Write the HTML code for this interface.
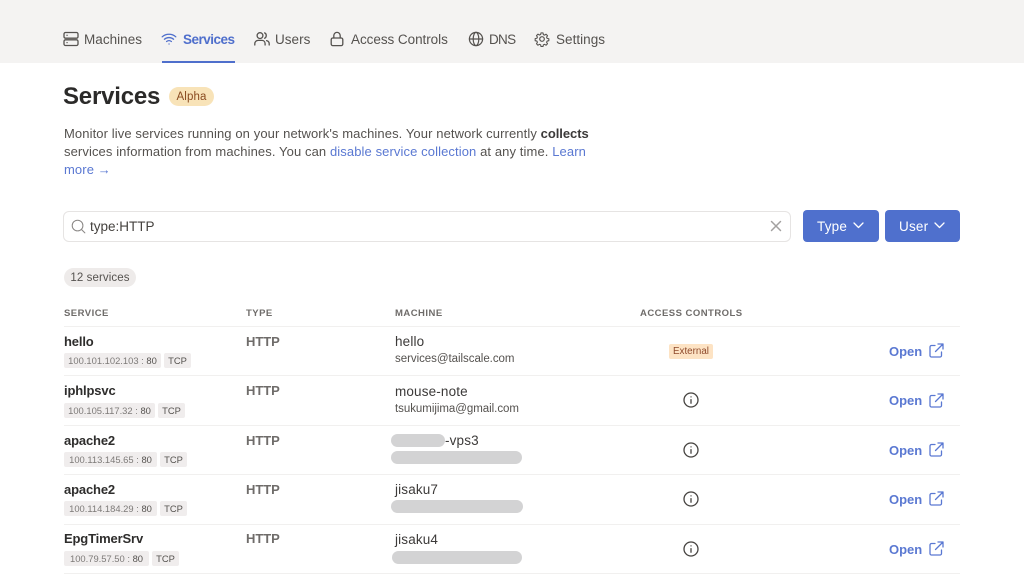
<!DOCTYPE html>
<html><head><meta charset="utf-8">
<style>
html,body{margin:0;padding:0;background:#fff}
#p{position:relative;width:1024px;height:581px;overflow:hidden;background:#fff;font-family:"Liberation Sans",sans-serif;color:#3c3a39}
.t{position:absolute;white-space:nowrap;line-height:18px}
.b{position:absolute}
svg{position:absolute;fill:none;stroke-linecap:round;stroke-linejoin:round}
.nav{font-size:13.5px;color:#55524f;top:31px;letter-spacing:.03px}
.hd{font-size:9.5px;font-weight:bold;color:#6f6c6a;letter-spacing:.47px;top:305px}
.nm{font-size:13px;font-weight:bold;color:#2e2d2c;letter-spacing:-.15px;left:64px}
.ty{font-size:13px;font-weight:bold;color:#6f6c6a;left:246px;letter-spacing:-.05px}
.mc{font-size:13.5px;color:#3c3a39;left:395px;letter-spacing:.15px}
.em{font-size:11.5px;color:#55524f;left:395px;letter-spacing:-.04px;margin-top:1px}
.tag{position:absolute;height:15px;line-height:15px;background:#f0eded;border-radius:2px;font-size:9.4px;color:#7d7a78;text-align:center;white-space:nowrap}
.tag b{font-weight:normal;color:#55524f}
.ln{position:absolute;left:64px;width:896px;height:1px;background:#f1f0ef}
.op{font-size:13px;font-weight:bold;color:#5a78d2;left:889px;letter-spacing:-.02px;margin-top:1px}
.rd{position:absolute;background:#d3d3d4;border-radius:7px;height:13px}
</style></head><body><div id="p">
<div class="b" style="left:0;top:0;width:1024px;height:63px;background:#f4f3f2"></div>
<div class="b" style="left:162px;top:61px;width:73px;height:2px;background:#4f6fcc"></div>

<svg style="left:63px;top:31px" width="16" height="16" viewBox="0 0 16 16" stroke="#55524f" stroke-width="1.3"><rect x="1" y="1.5" width="14" height="5.7" rx="1.5"/><rect x="1" y="8.8" width="14" height="5.7" rx="1.5"/><path d="M4 4.3h.1M4 11.6h.1"/></svg>
<div class="t nav" style="left:84px">Machines</div>

<svg style="left:161px;top:31px" width="16" height="16" viewBox="0 0 16 16" stroke="#4f6fcc" stroke-width="1.3"><path d="M1.2 5.8C5 2.4 11 2.4 14.8 5.8M3.4 8.2c2.7-2.2 6.5-2.2 9.2 0M5.6 10.5c1.4-1 3.4-1 4.8 0M8 13h.1"/></svg>
<div class="t nav" style="left:183px;color:#4f6fcc;font-weight:bold;letter-spacing:-.5px">Services</div>

<svg style="left:254px;top:31px" width="16" height="16" viewBox="0 0 16 16" stroke="#55524f" stroke-width="1.3"><circle cx="6" cy="4.6" r="2.9"/><path d="M.8 14v-1.3c0-1.9 1.5-3.3 3.4-3.3h3.6c1.9 0 3.3 1.4 3.3 3.3V14M10.6 1.9c2.2.7 2.2 4.6 0 5.3M12.6 9.6c1.6.4 2.6 1.6 2.6 3.2V14"/></svg>
<div class="t nav" style="left:275px">Users</div>

<svg style="left:329px;top:31px" width="16" height="16" viewBox="0 0 16 16" stroke="#55524f" stroke-width="1.3"><rect x="2.2" y="7" width="11.6" height="7.6" rx="1.6"/><path d="M4.8 7V4.6a3.2 3.2 0 0 1 6.4 0V7"/></svg>
<div class="t nav" style="left:351px;letter-spacing:-.05px">Access Controls</div>

<svg style="left:468px;top:31px" width="16" height="16" viewBox="0 0 16 16" stroke="#55524f" stroke-width="1.2"><circle cx="8" cy="8" r="6.6"/><ellipse cx="8" cy="8" rx="2.8" ry="6.6"/><path d="M1.4 8h13.2"/></svg>
<div class="t nav" style="left:489px;letter-spacing:-.7px">DNS</div>

<svg style="left:534px;top:31px" width="16" height="16" viewBox="0 0 16 16" stroke="#55524f" stroke-width="1.2"><circle cx="8" cy="8" r="2.3"/><path d="M6.9 1.2h2.2l.4 1.9 1.3.6 1.7-1 1.6 1.6-1 1.7.6 1.3 1.9.4v2.2l-1.9.4-.6 1.3 1 1.7-1.6 1.6-1.7-1-1.3.6-.4 1.9H6.9l-.4-1.9-1.3-.6-1.7 1-1.6-1.6 1-1.7-.6-1.3-1.9-.4V7.6l1.9-.4.6-1.3-1-1.7 1.6-1.6 1.7 1 1.3-.6z" transform="translate(.8 .8) scale(.9)"/></svg>
<div class="t nav" style="left:556px">Settings</div>

<div class="t" style="left:63px;top:82px;font-size:24px;line-height:30px;font-weight:bold;color:#2b2a29;letter-spacing:-.2px">Services</div>
<div class="b" style="left:169px;top:87px;width:45px;height:19px;border-radius:10px;background:#f8e3b8;color:#8a4b20;font-size:11.5px;line-height:21px;text-align:center;letter-spacing:.1px">Alpha</div>

<div class="t" style="left:64px;top:125px;font-size:13px;color:#55524f;letter-spacing:.1px">Monitor live services running on your network's machines. Your network currently <b style="color:#3c3a39;letter-spacing:-.05px">collects</b></div>
<div class="t" style="left:64px;top:143px;font-size:13px;color:#55524f;letter-spacing:.1px">services information from machines. You can <span style="color:#5a78d2">disable service collection</span> at any time. <span style="color:#5a78d2">Learn</span></div>
<div class="t" style="left:64px;top:161px;font-size:13px;color:#5a78d2;letter-spacing:.1px">more →</div>

<div class="b" style="left:63px;top:211px;width:726px;height:29px;border:1px solid #e6e4e3;border-radius:6px;background:#fff"></div>
<svg style="left:71px;top:219px" width="15" height="15" viewBox="0 0 16 16" stroke="#8b8886" stroke-width="1.1"><circle cx="7" cy="7" r="5.7"/><path d="M11.2 11.2l3.6 3.6"/></svg>
<div class="t" style="left:90px;top:218px;font-size:13.5px;color:#45423f;letter-spacing:0">type:HTTP</div>
<svg style="left:770px;top:220px" width="12" height="12" viewBox="0 0 12 12" stroke="#a3a1a0" stroke-width="1.5"><path d="M1.5 1.5l9 9M10.5 1.5l-9 9"/></svg>

<div class="b" style="left:803px;top:210px;width:76px;height:32px;background:#4f70cd;border-radius:4px"></div>
<div class="t" style="left:817px;top:218px;font-size:13.5px;color:#fff;letter-spacing:.2px">Type</div>
<svg style="left:853px;top:222px" width="11" height="7" viewBox="0 0 11 7" stroke="#fff" stroke-width="1.3"><path d="M1 1l4.5 4.5L10 1"/></svg>
<div class="b" style="left:885px;top:210px;width:75px;height:32px;background:#4f70cd;border-radius:4px"></div>
<div class="t" style="left:899px;top:218px;font-size:13.5px;color:#fff;letter-spacing:.2px">User</div>
<svg style="left:934px;top:222px" width="11" height="7" viewBox="0 0 11 7" stroke="#fff" stroke-width="1.3"><path d="M1 1l4.5 4.5L10 1"/></svg>

<div class="b" style="left:64px;top:268px;width:72px;height:19px;border-radius:10px;background:#eeebea;color:#55524f;font-size:11.5px;line-height:21px;text-align:center;letter-spacing:.1px">12 services</div>

<div class="t hd" style="left:64px">SERVICE</div>
<div class="t hd" style="left:246px">TYPE</div>
<div class="t hd" style="left:395px">MACHINE</div>
<div class="t hd" style="left:640px">ACCESS CONTROLS</div>
<div class="ln" style="top:326px"></div>
<div class="ln" style="top:375px"></div>
<div class="ln" style="top:425px"></div>
<div class="ln" style="top:474px"></div>
<div class="ln" style="top:524px"></div>
<div class="ln" style="top:573px"></div>

<!-- row 1 -->
<div class="t nm" style="top:333px">hello</div>
<div class="tag" style="left:64px;top:353px;width:97px"><span>100.101.102.103</span> : <b>80</b></div>
<div class="tag" style="left:164px;top:353px;width:27px"><b>TCP</b></div>
<div class="t ty" style="top:333px">HTTP</div>
<div class="t mc" style="top:333px">hello</div>
<div class="t em" style="top:349px">services@tailscale.com</div>
<div class="b" style="left:669px;top:344px;width:44px;height:15px;background:#fde3c4;border-radius:2px;color:#8f4a2c;font-size:9.8px;line-height:15px;text-align:center">External</div>
<div class="t op" style="top:342px">Open</div>
<svg style="left:929px;top:343px" width="15" height="15" viewBox="0 0 15 15" stroke="#5a78d2" stroke-width="1.3"><path d="M6 2.5H2.5A1.5 1.5 0 0 0 1 4v8.5A1.5 1.5 0 0 0 2.5 14H11a1.5 1.5 0 0 0 1.5-1.5V9M9 1h5v5M14 1L6.5 8.5"/></svg>

<!-- row 2 -->
<div class="t nm" style="top:382px">iphlpsvc</div>
<div class="tag" style="left:64px;top:403px;width:91px"><span>100.105.117.32</span> : <b>80</b></div>
<div class="tag" style="left:158px;top:403px;width:27px"><b>TCP</b></div>
<div class="t ty" style="top:382px">HTTP</div>
<div class="t mc" style="top:383px">mouse-note</div>
<div class="t em" style="top:399px">tsukumijima@gmail.com</div>
<svg style="left:683px;top:392px" width="16" height="16" viewBox="0 0 16 16" stroke="#45423f" stroke-width="1.3"><circle cx="8" cy="8" r="7"/><path d="M8 7.6v3.6M8 4.9h.05"/></svg>
<div class="t op" style="top:391px">Open</div>
<svg style="left:929px;top:393px" width="15" height="15" viewBox="0 0 15 15" stroke="#5a78d2" stroke-width="1.3"><path d="M6 2.5H2.5A1.5 1.5 0 0 0 1 4v8.5A1.5 1.5 0 0 0 2.5 14H11a1.5 1.5 0 0 0 1.5-1.5V9M9 1h5v5M14 1L6.5 8.5"/></svg>

<!-- row 3 -->
<div class="t nm" style="top:432px">apache2</div>
<div class="tag" style="left:64px;top:452px;width:93px"><span>100.113.145.65</span> : <b>80</b></div>
<div class="tag" style="left:160px;top:452px;width:27px"><b>TCP</b></div>
<div class="t ty" style="top:432px">HTTP</div>
<div class="rd" style="left:391px;top:434px;width:54px"></div>
<div class="t mc" style="top:432px;left:445px">-vps3</div>
<div class="rd" style="left:391px;top:451px;width:131px"></div>
<svg style="left:683px;top:442px" width="16" height="16" viewBox="0 0 16 16" stroke="#45423f" stroke-width="1.3"><circle cx="8" cy="8" r="7"/><path d="M8 7.6v3.6M8 4.9h.05"/></svg>
<div class="t op" style="top:441px">Open</div>
<svg style="left:929px;top:442px" width="15" height="15" viewBox="0 0 15 15" stroke="#5a78d2" stroke-width="1.3"><path d="M6 2.5H2.5A1.5 1.5 0 0 0 1 4v8.5A1.5 1.5 0 0 0 2.5 14H11a1.5 1.5 0 0 0 1.5-1.5V9M9 1h5v5M14 1L6.5 8.5"/></svg>

<!-- row 4 -->
<div class="t nm" style="top:481px">apache2</div>
<div class="tag" style="left:64px;top:501px;width:93px"><span>100.114.184.29</span> : <b>80</b></div>
<div class="tag" style="left:160px;top:501px;width:27px"><b>TCP</b></div>
<div class="t ty" style="top:481px">HTTP</div>
<div class="t mc" style="top:481px">jisaku7</div>
<div class="rd" style="left:391px;top:500px;width:132px"></div>
<svg style="left:683px;top:491px" width="16" height="16" viewBox="0 0 16 16" stroke="#45423f" stroke-width="1.3"><circle cx="8" cy="8" r="7"/><path d="M8 7.6v3.6M8 4.9h.05"/></svg>
<div class="t op" style="top:490px">Open</div>
<svg style="left:929px;top:491px" width="15" height="15" viewBox="0 0 15 15" stroke="#5a78d2" stroke-width="1.3"><path d="M6 2.5H2.5A1.5 1.5 0 0 0 1 4v8.5A1.5 1.5 0 0 0 2.5 14H11a1.5 1.5 0 0 0 1.5-1.5V9M9 1h5v5M14 1L6.5 8.5"/></svg>

<!-- row 5 -->
<div class="t nm" style="top:530px">EpgTimerSrv</div>
<div class="tag" style="left:64px;top:551px;width:85px"><span>100.79.57.50</span> : <b>80</b></div>
<div class="tag" style="left:152px;top:551px;width:27px"><b>TCP</b></div>
<div class="t ty" style="top:530px">HTTP</div>
<div class="t mc" style="top:531px">jisaku4</div>
<div class="rd" style="left:392px;top:551px;width:130px"></div>
<svg style="left:683px;top:541px" width="16" height="16" viewBox="0 0 16 16" stroke="#45423f" stroke-width="1.3"><circle cx="8" cy="8" r="7"/><path d="M8 7.6v3.6M8 4.9h.05"/></svg>
<div class="t op" style="top:540px">Open</div>
<svg style="left:929px;top:541px" width="15" height="15" viewBox="0 0 15 15" stroke="#5a78d2" stroke-width="1.3"><path d="M6 2.5H2.5A1.5 1.5 0 0 0 1 4v8.5A1.5 1.5 0 0 0 2.5 14H11a1.5 1.5 0 0 0 1.5-1.5V9M9 1h5v5M14 1L6.5 8.5"/></svg>
</div></body></html>
